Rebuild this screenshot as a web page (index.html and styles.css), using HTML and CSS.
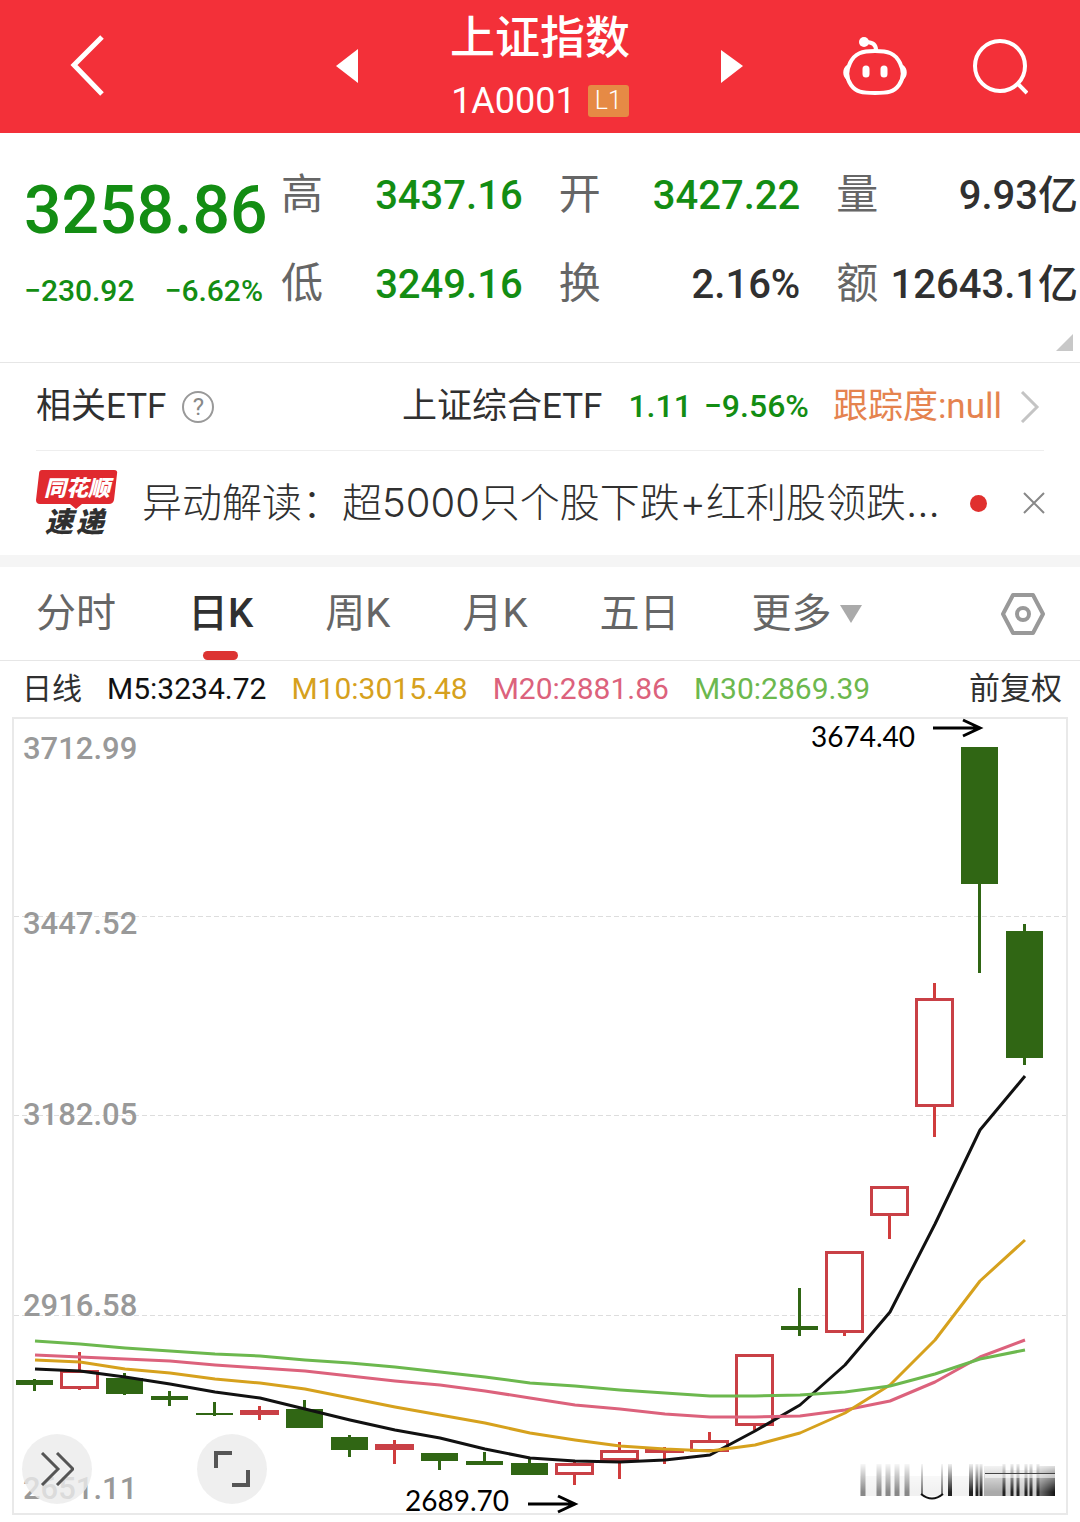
FILE: index.html
```
<!DOCTYPE html>
<html lang="zh-CN">
<head>
    <meta charset="UTF-8">
    <meta name="viewport" content="width=device-width, initial-scale=1.0">
    <title>上证指数 1A0001</title>
    <link rel="stylesheet" href="styles.css">
</head>
<body>

    <header class="header">
        <div class="header-left">
            <button class="icon-btn" aria-label="返回">
                <svg width="36" height="64" viewBox="0 0 36 64"><path d="M32 2 L4 30 L32 59" fill="none" stroke="#fff" stroke-width="5"/></svg>
            </button>
            <button class="icon-btn" aria-label="上一个">
                <svg width="24" height="36" viewBox="0 0 24 36"><path d="M22 0 V34 L0 17 Z" fill="#fff"/></svg>
            </button>
        </div>
        <div class="header-title">
            <h1>上证指数</h1>
            <div class="code">1A0001 <span class="level">L1</span></div>
        </div>
        <div class="header-right">
            <button class="icon-btn" aria-label="下一个">
                <svg width="24" height="36" viewBox="0 0 24 36"><path d="M1 1 V34 L23 17 Z" fill="#fff"/></svg>
            </button>
            <div class="header-tools">
                <button class="icon-btn" aria-label="智能助手">
                    <svg width="66" height="62" viewBox="0 0 66 62" fill="none" stroke="#fff">
                        <path d="M33 15 C20 15 13 17 8 27 C4 35 4 42 9 49 C14 56 20 57 33 57 C46 57 52 56 57 49 C62 42 62 35 58 27 C53 17 46 15 33 15 Z" stroke-width="4"/>
                        <path d="M34 14 C34 9 31 6 24 6" stroke-width="4"/>
                        <circle cx="22" cy="6" r="5" fill="#fff" stroke="none"/>
                        <path d="M5 29 C0 32 0 41 5 44 Z M61 29 C66 32 66 41 61 44 Z" fill="#fff" stroke="none"/>
                        <path d="M24 33 V38 M42 33 V38" stroke-width="7" stroke-linecap="round"/>
                    </svg>
                </button>
                <button class="icon-btn" aria-label="搜索">
                    <svg width="56" height="56" viewBox="0 0 56 56" fill="none" stroke="#fff" stroke-width="4">
                        <circle cx="28" cy="27" r="25"/>
                        <path d="M45 44 L55 54"/>
                    </svg>
                </button>
            </div>
        </div>
    </header>

    <section class="quote">
        <div class="price">
            <div class="price-now">3258.86</div>
            <div class="price-change"><span>−230.92</span><span>−6.62%</span></div>
        </div>
        <dl class="stats">
            <div class="stat"><dt>高</dt><dd class="down">3437.16</dd></div>
            <div class="stat"><dt>开</dt><dd class="down">3427.22</dd></div>
            <div class="stat"><dt>量</dt><dd>9.93亿</dd></div>
            <div class="stat"><dt>低</dt><dd class="down">3249.16</dd></div>
            <div class="stat"><dt>换</dt><dd>2.16%</dd></div>
            <div class="stat"><dt>额</dt><dd>12643.1亿</dd></div>
        </dl>
        <div class="quote-more"></div>
    </section>

    <section class="etf">
        <h2>相关ETF</h2>
        <button class="help" aria-label="说明">?</button>
        <a href="#" class="etf-link">
            <span>上证综合ETF</span>
            <span class="etf-num down">1.11</span>
            <span class="etf-pct down">−9.56%</span>
            <span class="etf-track">跟踪度:null</span>
            <svg width="20" height="32" viewBox="0 0 20 32"><path d="M2 1 L17 16 L2 31" fill="none" stroke="#c4c4c4" stroke-width="3"/></svg>
        </a>
    </section>

    <section class="news">
        <svg class="news-logo" width="82" height="80" viewBox="0 -6 82 80">
            <path d="M6 1 H78 Q82 1 81 5 L78 31 Q77 35 73 35 H46 L40 40 L34 35 H4 Q0 35 0 31 L3 5 Q3 1 6 1 Z" fill="#e0292f"/>
            <text x="8" y="27" class="logo-top">同花顺</text>
            <text x="9" y="63" class="logo-bottom">速</text>
            <text x="40" y="63" class="logo-bottom">递</text>
        </svg>
        <a href="#" class="news-text">异动解读：超5000只个股下跌+红利股领跌...</a>
        <span class="dot"></span>
        <button class="icon-btn" aria-label="关闭">
            <svg width="24" height="24" viewBox="0 0 24 24"><path d="M2 2 L22 22 M22 2 L2 22" stroke="#888" stroke-width="2"/></svg>
        </button>
    </section>

    <nav class="tabs">
        <button class="tab">分时</button>
        <button class="tab active">日K</button>
        <button class="tab">周K</button>
        <button class="tab">月K</button>
        <button class="tab">五日</button>
        <button class="tab">更多<svg width="22" height="18" viewBox="0 0 22 18"><path d="M0 0 H22 L11 18 Z" fill="#aaa"/></svg></button>
        <button class="icon-btn settings" aria-label="设置">
            <svg width="46" height="44" viewBox="0 0 46 44" fill="none" stroke="#999" stroke-width="4" stroke-linejoin="round">
                <path d="M13 3 H33 L43 22 L33 41 H13 L3 22 Z"/>
                <circle cx="23" cy="22" r="6"/>
            </svg>
        </button>
    </nav>

    <div class="legend">
        <span class="period">日线</span>
        <span class="m5">M5:3234.72</span>
        <span class="m10">M10:3015.48</span>
        <span class="m20">M20:2881.86</span>
        <span class="m30">M30:2869.39</span>
        <button class="adjust">前复权</button>
    </div>

    <main class="chart">
        <svg class="kline" viewBox="0 716 1080 806">
            <defs>
                <linearGradient id="fade" x1="0" y1="0" x2="0" y2="1">
                    <stop offset="0" stop-color="#fff"/>
                    <stop offset="1" stop-color="#fff" stop-opacity="0"/>
                </linearGradient>
                <linearGradient id="dark" x1="0" y1="0" x2="1" y2="0">
                    <stop offset="0" stop-color="#777"/>
                    <stop offset="1" stop-color="#111"/>
                </linearGradient>
            </defs>

            <!-- frame and grid -->
            <rect x="13" y="718" width="1054" height="796" fill="none" stroke="#e9e9e9" stroke-width="2"/>
            <path class="grid" d="M14 916.500 H1066 M14 1115.500 H1066 M14 1315.500 H1066"/>

            <!-- price axis -->
            <g class="axis">
                <text x="23" y="759">3712.99</text>
                <text x="23" y="934">3447.52</text>
                <text x="23" y="1125">3182.05</text>
                <text x="23" y="1316">2916.58</text>
                <text x="23" y="1499">2651.11</text>
            </g>

            <!-- falling days -->
            <g class="wick-down">
                <path d="M34.500 1379 V1391 M124.500 1373 V1395 M169.500 1391 V1406 M214.500 1402 V1416 M304.500 1400 V1428 M349.500 1435 V1457 M439.500 1453 V1470 M484.500 1452 V1465 M529.500 1457 V1475 M799.500 1288 V1336 M979.500 747 V973 M1024.500 924 V1065"/>
            </g>
            <g class="body-down">
                <rect x="16" y="1380" width="37" height="5"/>
                <rect x="106" y="1378" width="37" height="16"/>
                <rect x="151" y="1396" width="37" height="4"/>
                <rect x="196" y="1413" width="37" height="2"/>
                <rect x="286" y="1409" width="37" height="19"/>
                <rect x="331" y="1437" width="37" height="13"/>
                <rect x="421" y="1453" width="37" height="8"/>
                <rect x="466" y="1461" width="37" height="4"/>
                <rect x="511" y="1463" width="37" height="12"/>
                <rect x="781" y="1326" width="37" height="4"/>
                <rect x="961" y="747" width="37" height="137"/>
                <rect x="1006" y="931" width="37" height="127"/>
            </g>

            <!-- rising days -->
            <g class="wick-up">
                <path d="M79.500 1352 V1371 M79.500 1388 V1390 M259.500 1406 V1420 M394.500 1440 V1464 M574.500 1461 V1464 M574.500 1475 V1485 M619.500 1442 V1451 M619.500 1461 V1479 M664.500 1447 V1464 M709.500 1432 V1441 M754.500 1425 V1430 M844.500 1332 V1336 M889.500 1216 V1239 M934.500 983 V999 M934.500 1106 V1137"/>
            </g>
            <g class="body-up">
                <rect x="61.500" y="1371.500" width="36" height="16"/>
                <rect x="241.500" y="1411.500" width="36" height="2"/>
                <rect x="376.500" y="1445.500" width="36" height="3"/>
                <rect x="556.500" y="1464.500" width="36" height="9"/>
                <rect x="601.500" y="1451.500" width="36" height="8"/>
                <rect x="646.500" y="1450.500" width="36" height="1"/>
                <rect x="691.500" y="1441.500" width="36" height="9"/>
                <rect x="736.500" y="1355.500" width="36" height="69"/>
                <rect x="826.500" y="1252.500" width="36" height="79"/>
                <rect x="871.500" y="1187.500" width="36" height="27"/>
                <rect x="916.500" y="999.500" width="36" height="106"/>
            </g>

            <!-- moving averages -->
            <polyline class="line m5" points="35,1369 80,1371 125,1377 170,1384 215,1392 260,1398 305,1409 350,1420 395,1430 440,1438 485,1449 530,1458 575,1461 620,1462 665,1460 710,1455 755,1431 800,1405 845,1365 890,1312 935,1224 980,1130 1025,1076"/>
            <polyline class="line m20" points="35,1355 80,1357 125,1359 170,1361 215,1365 260,1368 305,1371 350,1376 395,1381 440,1385 485,1391 530,1398 575,1405 620,1409 665,1414 710,1417 755,1417 800,1416 845,1410 890,1401 935,1382 980,1357 1025,1340"/>
            <polyline class="line m10" points="35,1360 80,1362 125,1369 170,1373 215,1379 260,1383 305,1389 350,1398 395,1407 440,1415 485,1423 530,1433 575,1440 620,1446 665,1449 710,1451 755,1445 800,1433 845,1413 890,1385 935,1340 980,1281 1025,1240"/>
            <polyline class="line m30" points="35,1341 80,1344 125,1348 170,1351 215,1354 260,1356 305,1360 350,1363 395,1367 440,1372 485,1377 530,1383 575,1386 620,1390 665,1393 710,1396 755,1396 800,1395 845,1392 890,1386 935,1374 980,1359 1025,1350"/>

            <!-- high and low marks -->
            <g class="mark">
                <text x="811" y="747">3674.40</text>
                <path d="M933 728 H979 M963 720 L980 728 L963 736"/>
                <text x="405" y="1511">2689.70</text>
                <path d="M528 1504 H574 M558 1496 L575 1504 L558 1512"/>
            </g>

            <!-- striped stamp -->
            <g class="stamp">
                <rect x="860" y="1476" width="124" height="20" fill="#f1f1f1"/>
                <rect x="1003" y="1470" width="36" height="26" fill="#ccc"/>
                <rect x="984" y="1466" width="19" height="30" fill="#aaa"/>
                <rect x="1038" y="1466" width="17" height="30" fill="url(#dark)"/>
                <path d="M863 1464 V1496 M879 1464 V1496 M888 1464 V1496 M897 1464 V1496 M907 1464 V1496" stroke="#888" stroke-width="5"/>
                <path d="M922 1464 V1494 M942 1464 V1494" stroke="#777" stroke-width="2"/>
                <path d="M950 1464 V1496 M971 1464 V1496" stroke="#222" stroke-width="4"/>
                <path d="M977 1464 V1496 M981 1464 V1496 M1004 1464 V1496 M1012 1464 V1496 M1018 1464 V1496 M1026 1464 V1496 M1031 1464 V1496 M1038 1464 V1496" stroke="#222" stroke-width="3"/>
                <rect x="858" y="1462" width="198" height="30" fill="url(#fade)"/>
                <rect x="985" y="1474" width="70" height="4" fill="#fff" fill-opacity="0.500"/>
                <path d="M985 1473.500 H1055" stroke="#444" stroke-width="1"/>
                <path d="M921 1494 Q932 1503 943 1494" fill="none" stroke="#111" stroke-width="2"/>
            </g>
        </svg>
        <div class="chart-tools">
            <button class="round-btn" aria-label="展开">
                <svg width="34" height="34" viewBox="0 0 34 34"><path d="M2 1 L18 17 L2 33 M17 1 L33 17 L17 33" fill="none" stroke="#555" stroke-width="3"/></svg>
            </button>
            <button class="round-btn" aria-label="全屏">
                <svg width="36" height="36" viewBox="0 0 36 36"><path d="M2 17 V2 H18 M34 19 V34 H18" fill="none" stroke="#555" stroke-width="4"/></svg>
            </button>
        </div>
    </main>

</body>
</html>
```
FILE: styles.css
```
* {
    margin: 0;
    padding: 0;
    box-sizing: border-box;
}

body {
    background: #fff;
    color: #303030;
    font-family: 'Roboto', 'Noto Sans CJK SC', sans-serif;
    line-height: 1.2;
}

button {
    background: none;
    border: none;
    font-family: inherit;
    line-height: inherit;
    color: inherit;
    cursor: pointer;
}

a {
    color: inherit;
    text-decoration: none;
}

svg {
    display: block;
}

.icon-btn {
    flex: none;
}

/* header */
.header {
    display: grid;
    grid-template-columns: 1fr 1fr 1fr;
    height: 133px;
    background: #f33039;
    color: #fff;
}

.header-left,
.header-right,
.header-tools {
    display: flex;
    align-items: center;
    justify-content: space-between;
}

.header-left {
    padding-left: 70px;
}

.header-right {
    padding-right: 52px;
}

.header-tools {
    gap: 64px;
}

.header-title {
    display: flex;
    flex-direction: column;
    align-items: center;
    padding-top: 9px;
}

.header-title h1 {
    font-size: 45px;
    line-height: 60px;
    font-weight: 500;
}

.code {
    display: flex;
    align-items: center;
    gap: 12px;
    font-size: 36px;
    line-height: 64px;
}

.level {
    padding: 0 7px;
    border-radius: 3px;
    background: #e68a45;
    font-size: 25px;
    line-height: 32px;
    font-weight: 300;
}

/* quote */
.quote {
    position: relative;
    display: flex;
    height: 230px;
    padding: 18px 2px 0 24px;
    border-bottom: 1px solid #e6e6e6;
}

.down,
.price {
    color: #138d13;
}

.price {
    flex: none;
    width: 257px;
}

.price-now {
    padding-top: 18px;
    font-size: 66px;
    line-height: 84px;
    font-weight: 500;
}

.price-change {
    display: flex;
    justify-content: space-between;
    padding-right: 18px;
    font-size: 30px;
    line-height: 76px;
    font-weight: 500;
}

.stats {
    flex: 1;
    display: grid;
    grid-template-columns: 1fr 1fr 1fr;
    grid-auto-rows: 89px;
    column-gap: 36px;
}

.stat {
    display: flex;
    justify-content: space-between;
    align-items: center;
    white-space: nowrap;
}

.stat dt {
    font-size: 42px;
    color: #666;
}

.stat dd {
    font-size: 40px;
    font-weight: 500;
}

.quote-more {
    position: absolute;
    right: 7px;
    bottom: 11px;
    border-left: 17px solid transparent;
    border-bottom: 17px solid #c8c8c8;
}

/* related etf */
.etf {
    display: flex;
    align-items: center;
    height: 88px;
    margin: 0 36px;
    border-bottom: 1px solid #eee;
    font-size: 35px;
}

.etf h2 {
    font-size: 35px;
    font-weight: 400;
}

.help {
    width: 32px;
    height: 32px;
    margin-left: 16px;
    border: 2px solid #999;
    border-radius: 50%;
    color: #888;
    font-size: 24px;
    line-height: 28px;
}

.etf-link {
    display: flex;
    align-items: center;
    margin-left: auto;
    padding-right: 4px;
}

.etf-num,
.etf-pct {
    margin-left: 26px;
    font-size: 32px;
    font-weight: 500;
}

.etf-pct {
    margin-left: 12px;
}

.etf-track {
    margin: 0 18px 0 24px;
    color: #e5834f;
}

/* news */
.news {
    display: flex;
    align-items: center;
    height: 116px;
    padding: 0 34px 0 36px;
    border-bottom: 12px solid #f5f5f5;
}

.news-logo {
    flex: none;
    margin-right: 24px;
}

.logo-top,
.logo-bottom {
    font-family: 'Noto Sans CJK SC', sans-serif;
    font-weight: 900;
    font-style: italic;
}

.logo-top {
    fill: #fff;
    font-size: 22px;
}

.logo-bottom {
    fill: #303030;
    font-size: 28px;
}

.news-text {
    flex: 1;
    overflow: hidden;
    font-family: 'Inter', 'Noto Sans CJK SC', sans-serif;
    font-size: 40px;
    line-height: 60px;
    font-weight: 300;
    white-space: nowrap;
}

.dot {
    flex: none;
    width: 17px;
    height: 17px;
    margin: 0 35px 0 24px;
    border-radius: 50%;
    background: #e0302e;
}

/* tabs */
.tabs {
    display: flex;
    align-items: center;
    gap: 72px;
    height: 94px;
    padding: 0 34px 0 36px;
    border-bottom: 1px solid #e6e6e6;
}

.tab {
    position: relative;
    display: flex;
    align-items: center;
    gap: 8px;
    height: 93px;
    font-size: 40px;
    color: #666;
}

.tab.active {
    font-weight: 500;
    color: #303030;
}

.tab.active::after {
    content: "";
    position: absolute;
    left: 50%;
    bottom: 0;
    width: 35px;
    height: 9px;
    margin-left: -18px;
    border-radius: 5px;
    background: #dc3432;
}

.settings {
    margin-left: auto;
}

/* moving average legend */
.legend {
    display: flex;
    align-items: center;
    gap: 25px;
    height: 55px;
    padding: 0 18px 0 22px;
    font-size: 30px;
    white-space: nowrap;
}

.adjust {
    margin-left: auto;
    font-size: 31px;
}

.m5 {
    color: #111;
    stroke: #111;
}

.m10 {
    color: #d6a11d;
    stroke: #d6a11d;
}

.m20 {
    color: #dc627c;
    stroke: #dc627c;
}

.m30 {
    color: #6cb84e;
    stroke: #6cb84e;
}

/* chart */
.chart {
    position: relative;
}

.kline {
    width: 100%;
    height: auto;
}

.grid {
    stroke: #ddd;
    stroke-dasharray: 5 3;
}

.axis {
    fill: #999;
    font-size: 31px;
    font-weight: 500;
}

.wick-down {
    stroke: #306614;
    stroke-width: 3;
}

.body-down {
    fill: #306614;
}

.wick-up {
    stroke: #d03c3c;
    stroke-width: 3;
}

.body-up {
    fill: #fff;
    stroke: #c94046;
    stroke-width: 3;
}

.line {
    fill: none;
    stroke-width: 3;
    stroke-linejoin: round;
}

.mark text {
    fill: #000;
    font-family: 'Lato', sans-serif;
    font-size: 28px;
}

.mark path {
    fill: none;
    stroke: #000;
    stroke-width: 3;
}

.chart-tools {
    position: absolute;
    left: 22px;
    bottom: 18px;
    display: flex;
    gap: 105px;
}

.round-btn {
    display: flex;
    align-items: center;
    justify-content: center;
    width: 70px;
    height: 70px;
    border-radius: 50%;
    background: rgba(235, 235, 235, 0.8);
}
```
